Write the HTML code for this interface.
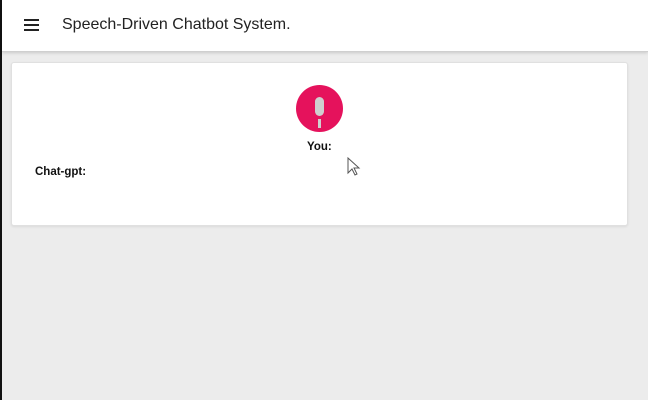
<!DOCTYPE html>
<html><head><style>
html,body{margin:0;padding:0;}
body{width:648px;height:400px;background:#ececec;font-family:"Liberation Sans",Arial,sans-serif;position:relative;overflow:hidden;}
.lb{position:absolute;left:0;top:0;width:2px;height:400px;background:#111;}
.hdr{position:absolute;left:2px;top:0;width:646px;height:51px;background:#fff;border-bottom:1px solid #cfcfcf;box-shadow:0 1px 3px rgba(0,0,0,.15);}
.ham{position:absolute;left:22px;top:19px;width:15px;}
.ham i{display:block;height:2px;background:#222;margin-bottom:3px;}
.title{position:absolute;left:60px;top:16px;font-size:16px;color:#222;}
.card{position:absolute;left:11px;top:62px;width:615px;height:162px;background:#fff;border:1px solid #e0e0e0;border-radius:3px;box-shadow:0 1px 2px rgba(0,0,0,.08);}
.mic{position:absolute;left:296px;top:85px;width:47px;height:47px;border-radius:50%;background:#e5125c;}
.you{position:absolute;left:307px;top:141px;font-size:11.5px;font-weight:bold;color:#111;}
.cg{position:absolute;left:35px;top:166px;font-size:11.5px;font-weight:bold;color:#111;}
</style></head><body>
<div class="lb"></div>
<div class="hdr"><div class="ham"><i></i><i></i><i></i></div><div class="title">Speech-Driven Chatbot System.</div></div>
<div class="card"></div>
<div class="mic"><svg width="47" height="47"><rect x="19" y="12" width="9" height="19" rx="4.5" fill="#cfcfcf"/><rect x="22" y="34" width="3" height="9" fill="#cfcfcf"/></svg></div>
<div class="you">You:</div>
<div class="cg">Chat-gpt:</div>
<svg style="position:absolute;left:347px;top:157px" width="14" height="20"><path d="M1 1 L1 16 L5 12 L8 18 L10 17 L7 11 L12 11 Z" fill="#fff" stroke="#555" stroke-width="1"/></svg>
</body></html>
